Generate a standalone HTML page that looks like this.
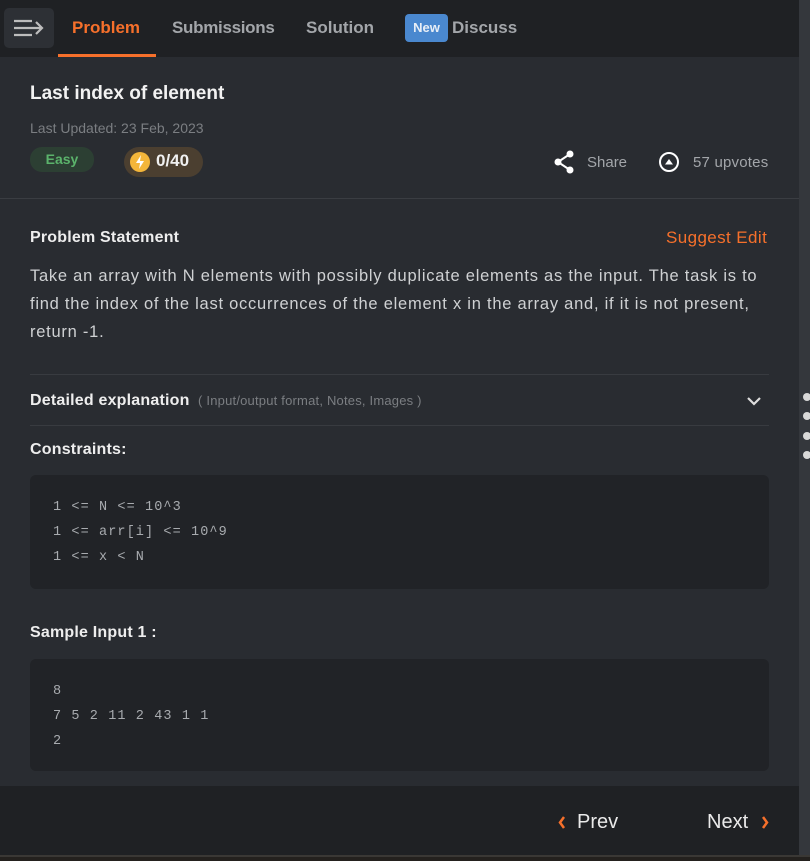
<!DOCTYPE html>
<html><head><style>
*{margin:0;padding:0;box-sizing:border-box}
body{width:810px;height:861px;background:#1f2124;font-family:"Liberation Sans",sans-serif;position:relative;overflow:hidden}
.rs{position:absolute;left:799px;top:0;width:11px;height:861px;background:#34373c}
.dot{position:absolute;left:803px;width:8px;height:8px;border-radius:50%;background:#d8d8d8}
.nav{position:absolute;left:0;top:0;width:799px;height:57px;background:#1f2124}
.main{position:absolute;left:0;top:57px;width:799px;height:729px;background:#292c31}
.foot{position:absolute;left:0;top:786px;width:799px;height:69px;background:#1f2124}
.bl{position:absolute;left:0;top:855px;width:810px;height:2px;background:#3a3835}
.bb{position:absolute;left:0;top:857px;width:810px;height:4px;background:#24211e}
.t{position:absolute;white-space:nowrap}
.code{position:absolute;left:30px;width:739px;background:#212327;border-radius:6px;font-family:"Liberation Mono",monospace;font-size:13.5px;letter-spacing:1.1px;color:#a8abaf;line-height:25px;padding-left:23px}
.hr{position:absolute;left:30px;width:739px;height:1px;background:#383b40}
</style></head><body>
<div class="rs"></div>
<div class="dot" style="top:393px"></div><div class="dot" style="top:412px"></div><div class="dot" style="top:432px"></div><div class="dot" style="top:451px"></div>
<div class="nav">
 <div style="position:absolute;left:4px;top:8px;width:50px;height:40px;background:#2d3035;border-radius:5px"></div>
 <svg style="position:absolute;left:12px;top:18px" width="34" height="20"><g stroke="#bdbdbd" stroke-width="2.2" fill="none"><path d="M2 3H20M2 10H30M2 17H20M24 4L30 10L24 16"/></g></svg>
 <div class="t" style="left:72px;top:18px;font-size:17px;font-weight:bold;color:#f6702b">Problem</div>
 <div style="position:absolute;left:58px;top:54px;width:98px;height:3px;background:#f6702b"></div>
 <div class="t" style="left:172px;top:18px;font-size:17px;font-weight:bold;color:#a3a6aa;letter-spacing:-0.3px">Submissions</div>
 <div class="t" style="left:306px;top:18px;font-size:17px;font-weight:bold;color:#a3a6aa">Solution</div>
 <div style="position:absolute;left:405px;top:14px;width:43px;height:28px;background:#4a88cf;border-radius:4px;color:#e8eef6;font-size:13px;font-weight:bold;text-align:center;line-height:28px">New</div>
 <div class="t" style="left:452px;top:18px;font-size:17px;font-weight:bold;color:#a3a6aa">Discuss</div>
</div>
<div class="main">
 <div class="t" style="left:30px;top:26px;font-size:19px;font-weight:bold;color:#f2f2f2">Last index of element</div>
 <div class="t" style="left:30px;top:63px;font-size:14px;color:#7b7e82">Last Updated: 23 Feb, 2023</div>
 <div style="position:absolute;left:30px;top:90px;width:64px;height:25px;background:#2c3f33;border-radius:12px;color:#5bb36b;font-size:14px;font-weight:bold;text-align:center;line-height:25px">Easy</div>
 <div style="position:absolute;left:124px;top:90px;width:79px;height:30px;background:#4b3f30;border-radius:15px"></div>
 <div style="position:absolute;left:130px;top:95px;width:20px;height:20px;border-radius:50%;background:#f4b63a"></div>
 <svg style="position:absolute;left:130px;top:95px" width="20" height="20"><path d="M11 3L6 11H10L9 17L14 9H10Z" fill="#fff"/></svg>
 <div class="t" style="left:156px;top:94px;font-size:17px;font-weight:bold;color:#f0f0f0">0/40</div>
 <svg style="position:absolute;left:553px;top:93px" width="22" height="24"><g fill="#fff"><circle cx="17" cy="4" r="3.5"/><circle cx="5" cy="12" r="3.5"/><circle cx="17" cy="20" r="3.5"/></g><path d="M17 4L5 12L17 20" stroke="#fff" stroke-width="2" fill="none"/></svg>
 <div class="t" style="left:587px;top:97px;font-size:15px;color:#a3a6aa">Share</div>
 <svg style="position:absolute;left:658px;top:94px" width="22" height="22"><circle cx="11" cy="11" r="9" stroke="#fff" stroke-width="2" fill="none"/><path d="M7 13.5L11 8L15 13.5Z" fill="#fff"/></svg>
 <div class="t" style="left:693px;top:97px;font-size:15px;color:#a3a6aa;letter-spacing:0.2px">57 upvotes</div>
 <div style="position:absolute;left:0;top:141px;width:799px;height:1px;background:#3a3d42"></div>
 <div class="t" style="left:30px;top:172px;font-size:16px;font-weight:bold;color:#eeeeee;letter-spacing:0.2px">Problem Statement</div>
 <div class="t" style="left:666px;top:171px;font-size:17px;color:#f6702b;letter-spacing:0.4px">Suggest Edit</div>
 <div style="position:absolute;left:30px;top:205px;width:745px;font-size:16.5px;letter-spacing:0.75px;line-height:28px;color:#cfd1d3">Take an array with N elements with possibly duplicate elements as the input. The task is to find the index of the last occurrences of the element x in the array and, if it is not present, return -1.</div>
 <div class="hr" style="top:317px"></div>
 <div class="t" style="left:30px;top:335px;font-size:16px;font-weight:bold;color:#eeeeee;letter-spacing:0.2px">Detailed explanation <span style="font-weight:normal;font-size:13px;color:#7b7e82;letter-spacing:0.2px">&nbsp;( Input/output format, Notes, Images )</span></div>
 <svg style="position:absolute;left:746px;top:338px" width="16" height="12"><path d="M2 3L8 9L14 3" stroke="#ddd" stroke-width="2.2" fill="none"/></svg>
 <div class="hr" style="top:368px"></div>
 <div class="t" style="left:30px;top:384px;font-size:16px;font-weight:bold;color:#eeeeee;letter-spacing:0.2px">Constraints:</div>
 <div class="code" style="top:418px;height:114px;padding-top:20px">1 &lt;= N &lt;= 10^3<br>1 &lt;= arr[i] &lt;= 10^9<br>1 &lt;= x &lt; N</div>
 <div class="t" style="left:30px;top:567px;font-size:16px;font-weight:bold;color:#eeeeee;letter-spacing:0.2px">Sample Input 1 :</div>
 <div class="code" style="top:602px;height:112px;padding-top:20px">8<br>7 5 2 11 2 43 1 1<br>2</div>
</div>
<div class="foot">
 <svg style="position:absolute;left:557px;top:29px" width="10" height="16"><path d="M7 2L3 7.5L7 13" stroke="#f6702b" stroke-width="2.5" fill="none"/></svg>
 <div class="t" style="left:577px;top:25px;font-size:20px;color:#eaeaea">Prev</div>
 <div class="t" style="left:707px;top:25px;font-size:20px;color:#eaeaea">Next</div>
 <svg style="position:absolute;left:760px;top:29px" width="10" height="16"><path d="M3 2L7 7.5L3 13" stroke="#f6702b" stroke-width="2.5" fill="none"/></svg>
</div>
<div class="bl"></div><div class="bb"></div>
</body></html>
